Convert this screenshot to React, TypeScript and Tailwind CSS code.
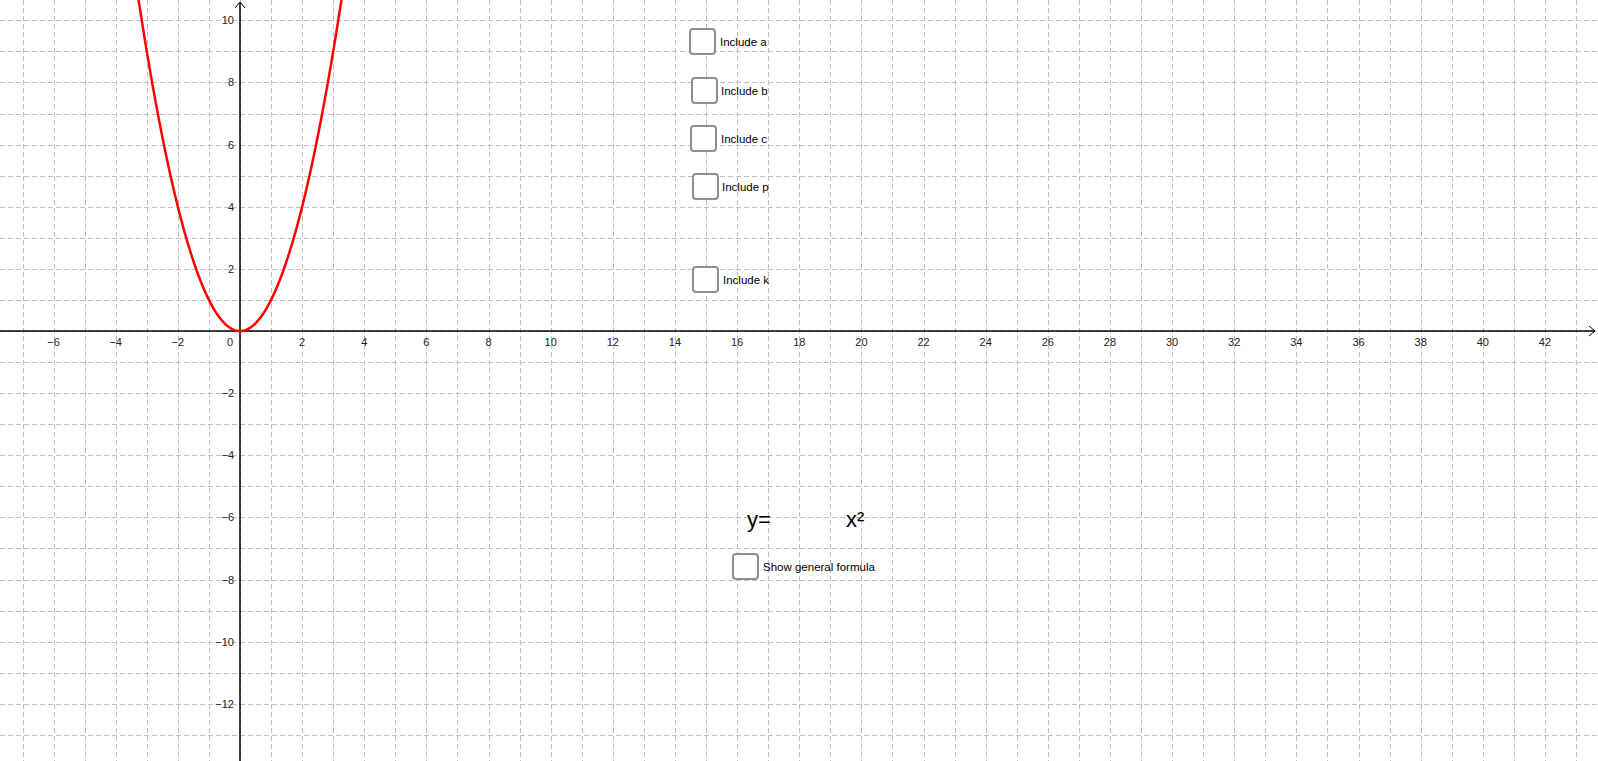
import React from 'react';

const W = 1598;
const H = 761;
const U = 31.07; // pixels per unit
const OX = 240;
const OY = 331;

const px = (x: number) => OX + x * U;
const py = (y: number) => OY - y * U;

interface Box {
  label: string;
  left: number;
  top: number;
  textLeft: number;
}

const boxes: Box[] = [
  { label: 'Include a', left: 689, top: 28, textLeft: 720 },
  { label: 'Include b', left: 691, top: 77, textLeft: 721 },
  { label: 'Include c', left: 690, top: 125, textLeft: 721 },
  { label: 'Include p', left: 692, top: 173, textLeft: 722 },
  { label: 'Include k', left: 692, top: 266, textLeft: 723 },
  { label: 'Show general formula', left: 732, top: 553, textLeft: 763 },
];

function Graph() {
  const vLines: number[] = [];
  for (let k = -7; k <= 43; k++) vLines.push(Math.round(px(k)) + 0.5);
  const hLines: number[] = [];
  for (let k = -13; k <= 10; k++) hLines.push(Math.round(py(k)) + 0.5);

  const xLabels: number[] = [];
  for (let k = -6; k <= 42; k += 2) if (k !== 0) xLabels.push(k);
  const yLabels: number[] = [];
  for (let k = -12; k <= 10; k += 2) if (k !== 0) yLabels.push(k);

  // parabola y = x^2
  const pts: string[] = [];
  for (let x = -3.4; x <= 3.4001; x += 0.02) {
    pts.push(`${px(x).toFixed(2)},${py(x * x).toFixed(2)}`);
  }

  const fmt = (n: number) => (n < 0 ? `\u2212${-n}` : `${n}`);

  return (
    <svg width={W} height={H} viewBox={`0 0 ${W} ${H}`} className="block">
      <rect width={W} height={H} fill="#ffffff" />
      <g stroke="#c0c0c0" strokeWidth={1} strokeDasharray="5 3">
        {vLines.map((x) => (
          <line key={`v${x}`} x1={x} y1={0} x2={x} y2={H} />
        ))}
        {hLines.map((y) => (
          <line key={`h${y}`} x1={0} y1={y} x2={W} y2={y} />
        ))}
      </g>

      {/* axes */}
      <g stroke="#000" strokeWidth={1.5} fill="none">
        <line x1={0} y1={OY} x2={1595} y2={OY} />
        <polyline points={`1589,${OY - 5} 1595,${OY} 1589,${OY + 5}`} strokeWidth={1} />
        <line x1={OX} y1={H} x2={OX} y2={2} />
        <polyline points={`${OX - 5},8 ${OX},2 ${OX + 5},8`} strokeWidth={1} />
      </g>

      <g fontFamily='"Liberation Sans", Arial, sans-serif' fontSize={11} fill="#222">
        {xLabels.map((k) => (
          <text key={`x${k}`} x={px(k)} y={346} textAnchor="middle">
            {fmt(k)}
          </text>
        ))}
        <text x={230} y={346} textAnchor="middle">0</text>
        {yLabels.map((k) => (
          <text key={`y${k}`} x={234} y={py(k) + 4} textAnchor="end">
            {fmt(k)}
          </text>
        ))}
      </g>

      <polyline points={pts.join(' ')} fill="none" stroke="#ff0000" strokeWidth={2.5} strokeLinejoin="round" />
    </svg>
  );
}

export default function App() {
  return (
    <div className="relative w-[1598px] h-[761px] overflow-hidden bg-white font-['Liberation_Sans',Arial,sans-serif]">
      <Graph />

      {boxes.map((b) => (
        <React.Fragment key={b.label}>
          <div
            className="absolute w-[27px] h-[27px] rounded-[4px] border-2 border-[#8e8e8e] bg-white"
            style={{ left: b.left, top: b.top }}
          />
          <span
            className="absolute text-[11.5px] leading-[14px] text-black whitespace-nowrap"
            style={{ left: b.textLeft, top: b.top + 7 }}
          >
            {b.label}
          </span>
        </React.Fragment>
      ))}

      <span className="absolute left-[747px] top-[507px] text-[22px] leading-[26px] text-black">y=</span>
      <span className="absolute left-[846px] top-[507px] text-[22px] leading-[26px] text-black">x²</span>
    </div>
  );
}
